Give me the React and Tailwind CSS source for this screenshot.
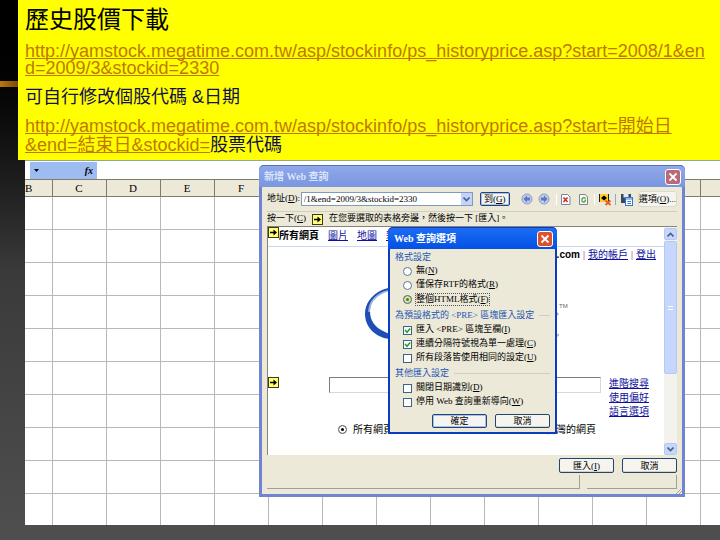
import React from "react";

const columns = ["B", "C", "D", "E", "F", "", "", "", "", "", "", "", "", ""];
const rows = [1, 2, 3, 4, 5, 6, 7, 8, 9, 10];

const serif = "font-['Liberation_Serif','Noto_Sans_CJK_TC',serif]";
const sans = "font-['Liberation_Sans','Noto_Sans_CJK_TC',sans-serif]";

function Banner() {
  return (
    <header className={`bg-[#ffff00] pt-2 pb-[5px] pl-[7px] text-[18px] text-black ${sans}`}>
      <h1 className="text-[24px] leading-[24px]">歷史股價下載</h1>
      <p className="mt-[11px] leading-[17px]">
        <a href="#history" className="text-[#c07800] underline [text-decoration-skip-ink:none]">
          http://yamstock.megatime.com.tw/asp/stockinfo/ps_historyprice.asp?start=2008/1&amp;en
          <br />
          d=2009/3&amp;stockid=2330
        </a>
      </p>
      <p className="mt-[10px] leading-[20px] text-[#10104a]">可自行修改個股代碼 &amp;日期</p>
      <p className="mt-[10px] leading-[19px] text-[#10104a]">
        <a href="#template" className="text-[#c07800] underline [text-decoration-skip-ink:none]">
          http://yamstock.megatime.com.tw/asp/stockinfo/ps_historyprice.asp?start=開始日
          <br />
          &amp;end=結束日&amp;stockid=
        </a>
        股票代碼
      </p>
    </header>
  );
}

function Sheet() {
  return (
    <div className={`overflow-hidden bg-white ${serif}`}>
      <div className="flex h-[19px] border-t border-[#8fa88f] pt-px pl-[5px]">
        <div className="flex w-[67px] items-center justify-between bg-[#9dbcf2] px-1 text-[10px] leading-[12px] text-black">
          <svg width="5" height="3" viewBox="0 0 5 3">
            <path d="M0 0h5L2.5 3z" fill="#000" />
          </svg>
          <i className="font-bold">fx</i>
        </div>
      </div>
      <table className="w-full table-fixed border-collapse">
        <thead>
          <tr className="h-[17px] border-y border-[#7d7d6c] bg-[#ece9d8]">
            {columns.map((name, i) => (
              <th
                key={i}
                className="w-[54px] border-r border-[#7d7d6c] p-0 text-[11px] leading-[16px] font-normal first:w-[27px] first:text-left last:w-auto last:border-r-0"
              >
                {name}
              </th>
            ))}
          </tr>
        </thead>
        <tbody>
          {rows.map((row) => (
            <tr key={row} className="h-[33px] border-b border-[#b8b8b8] last:h-[31px] last:border-b-0">
              {columns.map((_, i) => (
                <td key={i} className="border-r border-[#b8b8b8] p-0 last:border-r-0" />
              ))}
            </tr>
          ))}
        </tbody>
      </table>
    </div>
  );
}

function CloseButton({ active }) {
  return (
    <button
      type="button"
      aria-label="關閉"
      className={`flex h-4 w-4 items-center justify-center rounded-[3px] border border-white ${
        active ? "bg-[#dc5230]" : "bg-[#b86a78]"
      }`}
    >
      <svg width="10" height="10" viewBox="0 0 10 10" stroke="#fff" strokeWidth="1.8">
        <path d="M1.500 1.500l7 7M8.500 1.500l-7 7" />
      </svg>
    </button>
  );
}

function XpButton({ children, primary, className = "" }) {
  return (
    <button
      type="button"
      className={`rounded-[2px] border border-[#24466e] text-center leading-[12px] whitespace-nowrap text-black ${
        primary ? "bg-[#f4f4f2] shadow-[inset_0_0_0_1px_#a5c0ee]" : "bg-[#f5f4ee] shadow-[inset_0_-1px_0_#d6d0c5]"
      } ${className}`}
    >
      {children}
    </button>
  );
}

// the yellow marker that selects a table for import
function ArrowMark({ className = "" }) {
  return (
    <svg width="11" height="11" viewBox="0 0 11 11" className={`shrink-0 ${className}`}>
      <rect x="0.5" y="0.5" width="10" height="10" fill="#ffff7a" stroke="#3c3c10" />
      <path d="M2 4.700h3.500V2.500L9 5.500 5.500 8.500V6.300H2z" fill="#000" />
    </svg>
  );
}

function ToolbarIcons() {
  return (
    <svg width="114" height="16" viewBox="0 0 114 16" className="shrink-0" fill="none">
      <g stroke="#8b9cc8">
        <circle cx="6" cy="8" r="5" fill="#c0cce8" />
        <circle cx="23" cy="8" r="5" fill="#c0cce8" />
      </g>
      <g fill="#5c78bb">
        <path d="M2.500 8l3.500-3.500v2h3v3h-3v2z" />
        <path d="M26.500 8l-3.500-3.500v2h-3v3h3v2z" />
      </g>
      <path d="M35.500 3v11" stroke="#fff" />
      <path d="M40.500 3.500h6l2.500 2.500v7.500h-8.500z" fill="#fff" stroke="#74879f" />
      <path d="M42.500 6.500l4 4.500M46.500 6.500l-4 4.500" stroke="#cf2c20" strokeWidth="1.600" />
      <path d="M58.500 3.500h6l2 2.500v7.500h-8z" fill="#f4fbea" stroke="#74879f" />
      <path d="M64.500 7.500c-2-2-4 0-3.500 2M60.500 9.500c2 3 4 1 4-1" stroke="#4d9440" strokeWidth="1.300" />
      <path d="M73.500 3v11" stroke="#fff" />
      <rect x="78" y="3" width="10" height="8" fill="#ffce2e" />
      <path d="M78.500 3v8M87.500 3v8" stroke="#222" />
      <path d="M80 7l3-2.500 3 2.500-3 2.500z" fill="#000" />
      <path d="M84.500 9.500l5 4.500M89.500 9.500l-5 4.500" stroke="#f05a20" strokeWidth="1.800" />
      <path d="M94.500 3v11" stroke="#8ba8d8" />
      <path d="M100 3h10v9h-10z" fill="#334866" />
      <path d="M102.500 3h5v3.500h-5z" fill="#e5e9f3" />
      <rect x="104.500" y="6.500" width="7" height="8" fill="#fff" stroke="#3377cc" />
      <path d="M104.500 8h7M106.500 10.500h3.500M106.500 12.500h3.500" stroke="#3377cc" />
    </svg>
  );
}

function ScrollArrow({ down }) {
  return (
    <button
      type="button"
      aria-label={down ? "向下捲動" : "向上捲動"}
      className="flex h-3 w-full items-center justify-center rounded-[2px] border border-[#b4c8f6] bg-[#c6d6fc]"
    >
      <svg width="7" height="5" viewBox="0 0 7 5" fill="none" stroke="#4d6185" strokeWidth="1.600">
        <path d={down ? "M0.500 0.500l3 3 3-3" : "M0.500 4.500l3-3 3 3"} />
      </svg>
    </button>
  );
}

function WebPage() {
  const link = "text-[#10109c] underline";
  return (
    <div className="min-w-0 flex-1 text-[10px] text-black">
      <nav className="flex h-5 items-start gap-[9px] border-b border-[#c9d7f1] leading-[18px]">
        <span className="flex items-start">
          <ArrowMark />
          <b>所有網頁</b>
        </span>
        <a href="#images" className={link}>圖片</a>
        <a href="#maps" className={link}>地圖</a>
        <a href="#news" className={link}>新聞</a>
      </nav>
      <div className="flex h-4 justify-end gap-[3px] pr-2 leading-[16px]">
        <b className={sans}>gmail.com</b>
        <span className="text-[#7b2a55]">|</span>
        <a href="#account" className={link}>我的帳戶</a>
        <span className="text-[#7b2a55]">|</span>
        <a href="#logout" className={link}>登出</a>
      </div>
      <svg width="206" height="54" viewBox="0 0 206 54" className="mt-[23px] ml-[97px]" fill="none">
        <path
          d="M40 4C33 1 24 1 17 4C6 9 0 18 0 28C0 42 12 53 27 53C33 53 38 52 42 49L40 47C34 50 26 49 20 46C9 41 5 34 5 25C5 15 12 7 22 5C29 3 34 4 40 7z"
          fill="#1f4fb5"
        />
        <path d="M34 5C27 4 22 4 17 7C9 11 4 18 4 26" stroke="#9db3e4" strokeWidth="1.500" />
        <path d="M190 27q4 0 2 2M190 50q4 0 3-2" stroke="#b8a8e0" strokeWidth="2" />
        <text x="194" y="22" fontSize="6" fill="#666" fontFamily="Liberation Sans">TM</text>
      </svg>
      <div className="mt-[37px] flex items-start">
        <ArrowMark />
        <input
          type="text"
          aria-label="搜尋"
          className="ml-[50px] h-4 w-[272px] border border-[#d8d8d8] border-t-[#7c7c7c] border-l-[#7c7c7c] bg-white"
        />
        <div className="ml-2 flex flex-col leading-[14px]">
          <a href="#advanced" className={link}>進階搜尋</a>
          <a href="#preferences" className={link}>使用偏好</a>
          <a href="#language" className={link}>語言選項</a>
        </div>
      </div>
      <div className="mt-[2px] flex h-4 items-center justify-between pr-[68px] pl-[70px]">
        <label className="flex items-center gap-[6px]">
          <PageRadio defaultChecked />
          所有網頁
        </label>
        <label className="flex items-center gap-[6px]">
          <PageRadio />
          台灣的網頁
        </label>
      </div>
    </div>
  );
}

function PageRadio(props) {
  return (
    <input
      type="radio"
      name="scope"
      className="h-[9px] w-[9px] appearance-none rounded-full border border-[#808080] bg-white checked:bg-black checked:shadow-[inset_0_0_0_2px_#fff]"
      {...props}
    />
  );
}

function QueryWindow() {
  return (
    <section
      className={`absolute top-[5px] left-[234px] w-[426px] rounded-t-[5px] border-x-[3px] border-b-[3px] border-[#7183d3] bg-[#ece9d8] text-[9px] text-black ${serif}`}
    >
      <div className="-mx-[3px] flex h-[22px] items-center justify-between rounded-t-[5px] border-t border-[#5c70c0] bg-linear-to-b from-[#8fa8ea] to-[#7a96df] pr-1 pl-[5px]">
        <h2 className="text-[10px] leading-[14px] font-bold text-[#dbe4fa]">新增 Web 查詢</h2>
        <CloseButton />
      </div>
      <div className="mx-[5px] flex h-[25px] items-center border-b border-[#d2cebd]">
        <label htmlFor="address" className="w-[34px] whitespace-nowrap">
          地址(<u>D</u>):
        </label>
        <div className="flex h-[14px] w-[173px] border border-[#7f9db9] bg-white">
          <input
            id="address"
            type="text"
            defaultValue="/1&end=2009/3&stockid=2330"
            className="min-w-0 flex-1 pl-[2px] leading-[12px] outline-none"
          />
          <button
            type="button"
            aria-label="展開"
            className="flex w-[11px] items-center justify-center bg-[#c3d3fb]"
          >
            <svg width="7" height="5" viewBox="0 0 7 5" fill="none" stroke="#4d6185" strokeWidth="1.600">
              <path d="M0.500 0.500l3 3 3-3" />
            </svg>
          </button>
        </div>
        <XpButton primary className="ml-[7px] w-[30px]">
          到(<u>G</u>)
        </XpButton>
        <div className="ml-[11px] flex">
          <ToolbarIcons />
        </div>
        <button
          type="button"
          className="ml-[3px] h-4 flex-1 rounded-[3px] border border-[#dedacb] bg-[#f5f4ee] leading-[12px] whitespace-nowrap"
        >
          選項(<u>O</u>)...
        </button>
      </div>
      <p className="mx-[5px] flex h-[14px] items-center whitespace-nowrap">
        按一下(<u>C</u>)
        <ArrowMark className="mr-[6px] ml-[6px]" />
        在您要選取的表格旁邊，然後按一下 [匯入]。
      </p>
      <div className="mx-[5px] flex h-[229px] border-t border-l border-[#85837a] bg-white">
        <WebPage />
        <div className="flex w-[13px] flex-col bg-[#f3f2ec] pt-px">
          <ScrollArrow />
          <div className="mt-px flex h-[133px] items-center justify-center rounded-[2px] border border-[#b4c8f6] bg-[#c6d6fc]">
            <div className="h-1 w-[5px] border-y border-white" />
          </div>
          <div className="mt-auto">
            <ScrollArrow down />
          </div>
        </div>
      </div>
      <div className="mx-[5px] mt-[3px] flex justify-end gap-2">
        <XpButton className="h-[15px] w-[55px]">
          匯入(<u>I</u>)
        </XpButton>
        <XpButton className="h-[15px] w-[55px]">取消</XpButton>
      </div>
      <div className="mx-[5px] mt-[2px] flex h-[14px] gap-[7px]">
        <div className="flex-1 border-r border-b border-[#9aa09a]" />
        <div className="w-[90px] border-r border-b border-[#9aa09a]" />
      </div>
      <div className="flex h-[5px] justify-end">
        <svg width="7" height="5" viewBox="0 0 7 5" stroke="#aaa690">
          <path d="M1 5l5-5M4 5l3-3" />
        </svg>
      </div>
    </section>
  );
}

function GroupTitle({ children }) {
  return (
    <legend className="flex w-full items-center gap-[5px] leading-[14px] whitespace-nowrap text-[#2454b4]">
      {children}
      <span className="h-px flex-1 bg-[#d2cebd]" />
    </legend>
  );
}

function RadioRow({ text, hotkey, ...props }) {
  return (
    <label className="ml-2 flex h-[14px] items-center gap-1 whitespace-nowrap">
      <input
        type="radio"
        name="format"
        className="h-[9px] w-[9px] appearance-none rounded-full border border-[#5d7896] bg-white checked:bg-[#547a18] checked:shadow-[inset_0_0_0_2px_#dce7a0]"
        {...props}
      />
      <span className={props.defaultChecked ? "leading-[11px] outline-1 outline-dotted outline-[#555]" : ""}>
        {text}(<u>{hotkey}</u>)
      </span>
    </label>
  );
}

function CheckRow({ text, hotkey, ...props }) {
  return (
    <label className="ml-2 flex h-[14px] items-center gap-1 whitespace-nowrap">
      <span className="grid h-[9px] w-[9px] shrink-0">
        <input
          type="checkbox"
          className="peer col-start-1 row-start-1 h-[9px] w-[9px] appearance-none border border-[#3f6288] bg-white"
          {...props}
        />
        <svg
          viewBox="0 0 9 9"
          className="pointer-events-none col-start-1 row-start-1 hidden h-[9px] w-[9px] peer-checked:block"
          fill="none"
          stroke="#21a121"
          strokeWidth="1.600"
        >
          <path d="M2 4l2 2.200L7.200 2.500" />
        </svg>
      </span>
      <span>
        {text}(<u>{hotkey}</u>)
      </span>
    </label>
  );
}

function OptionsWindow() {
  return (
    <section
      className={`absolute top-[67px] left-[363px] w-[169px] rounded-t-[5px] border-2 border-t-0 border-[#0a3cc0] bg-[#ece9d8] text-[9px] text-black ${serif}`}
    >
      <div className="-mx-[2px] flex h-[22px] items-center justify-between rounded-t-[5px] border-t border-[#0a3cc0] bg-linear-to-b from-[#1c6cf4] to-[#0450e4] pr-1 pl-[6px]">
        <h2 className="text-[10px] leading-[14px] font-bold text-white">Web 查詢選項</h2>
        <CloseButton active />
      </div>
      <div className="px-[5px] pt-px pb-1">
        <fieldset>
          <legend className="leading-[14px] text-[#2454b4]">格式設定</legend>
          <RadioRow text="無" hotkey="N" />
          <RadioRow text="僅保存RTF的格式" hotkey="R" />
          <RadioRow text="整個HTML格式" hotkey="F" defaultChecked />
        </fieldset>
        <fieldset className="mt-[2px] pt-px">
          <GroupTitle>為預設格式的 &lt;PRE&gt; 區塊匯入設定</GroupTitle>
          <CheckRow text="匯入 <PRE> 區塊至欄" hotkey="I" defaultChecked />
          <CheckRow text="連續分隔符號視為單一處理" hotkey="C" defaultChecked />
          <CheckRow text="所有段落皆使用相同的設定" hotkey="U" />
        </fieldset>
        <fieldset className="mt-px pt-px">
          <GroupTitle>其他匯入設定</GroupTitle>
          <CheckRow text="關閉日期識別" hotkey="D" />
          <CheckRow text="停用 Web 查詢重新導向" hotkey="W" />
        </fieldset>
        <div className="mt-[5px] flex justify-end gap-2">
          <XpButton primary className="w-[55px]">確定</XpButton>
          <XpButton className="w-[55px]">取消</XpButton>
        </div>
      </div>
    </section>
  );
}

export default function App() {
  return (
    <div className="flex min-h-screen bg-linear-to-b from-black via-[#3a3a3a] to-[#4f4f4f]">
      <aside className="w-[18px] shrink-0 pt-[81px]">
        <div className="h-[6px] bg-linear-to-r from-[#b87a10] to-[#7c4a08]" />
      </aside>
      <main className="min-w-0 flex-1">
        <Banner />
        <div className="relative ml-[7px]">
          <Sheet />
          <QueryWindow />
          <OptionsWindow />
        </div>
      </main>
    </div>
  );
}
